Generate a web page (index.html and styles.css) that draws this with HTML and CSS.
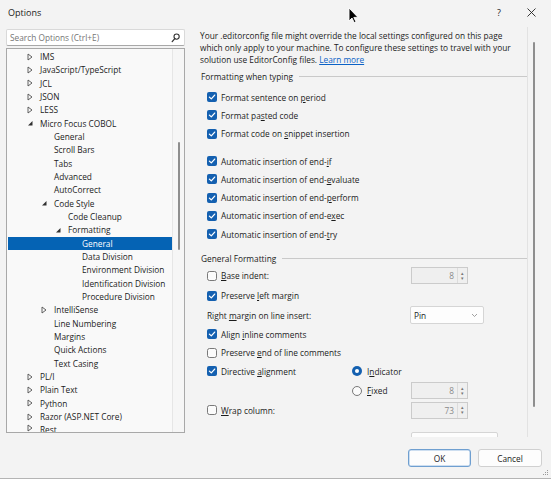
FILE: index.html
```html
<!DOCTYPE html>
<html>
<head>
<meta charset="utf-8">
<link rel="stylesheet" href="styles.css">
</head>
<body>
<svg class="defs" width="0" height="0">
  <defs>
    <symbol id="cb-on" viewBox="0 0 10 10">
      <rect x="0" y="0" width="10" height="10" rx="2" fill="#1460b0"/>
      <path d="M2.4 5.1 L4.3 6.9 L7.7 3.1" fill="none" stroke="#fff" stroke-width="1.3" stroke-linecap="round" stroke-linejoin="round"/>
    </symbol>
    <symbol id="cb-off" viewBox="0 0 10 10">
      <rect x="0.5" y="0.5" width="9" height="9" rx="2" fill="#fbfbfb" stroke="#6a6a6a" stroke-width="0.9"/>
    </symbol>
    <symbol id="rb-on" viewBox="0 0 10 10">
      <circle cx="5" cy="5" r="5" fill="#1460b0"/>
      <circle cx="5" cy="5" r="2" fill="#fff"/>
    </symbol>
    <symbol id="rb-off" viewBox="0 0 10 10">
      <circle cx="5" cy="5" r="4.5" fill="#fbfbfb" stroke="#6a6a6a" stroke-width="0.9"/>
    </symbol>
    <symbol id="tri-r" viewBox="0 0 6 8">
      <path d="M1 1 L5 4 L1 7 Z" fill="none" stroke="#505050" stroke-width="0.9" stroke-linejoin="round"/>
    </symbol>
    <symbol id="tri-d" viewBox="0 0 6 8">
      <path d="M5.5 2 L5.5 6.5 L1 6.5 Z" fill="#303030"/>
    </symbol>
  </defs>
</svg>

<div class="window">
  <div class="titlebar">
    <span class="title">Options</span>
    <span class="tb-spacer"></span>
    <span class="tb-btn help">?</span>
    <span class="tb-btn close"><svg width="9" height="9" viewBox="0 0 9 9"><path d="M0.5 0.5 L8.5 8.5 M8.5 0.5 L0.5 8.5" stroke="#222" stroke-width="0.9"/></svg></span>
  </div>

  <div class="main">
    <div class="left">
      <div class="search">
        <span class="search-ph">Search Options (Ctrl+E)</span>
        <svg class="search-ico" width="9" height="10" viewBox="0 0 9 10"><circle cx="5.6" cy="3.6" r="2.6" fill="none" stroke="#333" stroke-width="1.1"/><path d="M3.8 5.6 L1.2 8.6" stroke="#333" stroke-width="1.3" stroke-linecap="round"/></svg>
      </div>
      <div class="tree">
        <div class="tree-list">
          <div class="node l1"><svg class="arr"><use href="#tri-r"/></svg><span>IMS</span></div>
          <div class="node l1"><svg class="arr"><use href="#tri-r"/></svg><span>JavaScript/TypeScript</span></div>
          <div class="node l1"><svg class="arr"><use href="#tri-r"/></svg><span>JCL</span></div>
          <div class="node l1"><svg class="arr"><use href="#tri-r"/></svg><span>JSON</span></div>
          <div class="node l1"><svg class="arr"><use href="#tri-r"/></svg><span>LESS</span></div>
          <div class="node l1"><svg class="arr"><use href="#tri-d"/></svg><span>Micro Focus COBOL</span></div>
          <div class="node l2"><span class="arr"></span><span>General</span></div>
          <div class="node l2"><span class="arr"></span><span>Scroll Bars</span></div>
          <div class="node l2"><span class="arr"></span><span>Tabs</span></div>
          <div class="node l2"><span class="arr"></span><span>Advanced</span></div>
          <div class="node l2"><span class="arr"></span><span>AutoCorrect</span></div>
          <div class="node l2"><svg class="arr"><use href="#tri-d"/></svg><span>Code Style</span></div>
          <div class="node l3"><span class="arr"></span><span>Code Cleanup</span></div>
          <div class="node l3"><svg class="arr"><use href="#tri-d"/></svg><span>Formatting</span></div>
          <div class="node l4 sel"><span class="arr"></span><span>General</span></div>
          <div class="node l4"><span class="arr"></span><span>Data Division</span></div>
          <div class="node l4"><span class="arr"></span><span>Environment Division</span></div>
          <div class="node l4"><span class="arr"></span><span>Identification Division</span></div>
          <div class="node l4"><span class="arr"></span><span>Procedure Division</span></div>
          <div class="node l2"><svg class="arr"><use href="#tri-r"/></svg><span>IntelliSense</span></div>
          <div class="node l2"><span class="arr"></span><span>Line Numbering</span></div>
          <div class="node l2"><span class="arr"></span><span>Margins</span></div>
          <div class="node l2"><span class="arr"></span><span>Quick Actions</span></div>
          <div class="node l2"><span class="arr"></span><span>Text Casing</span></div>
          <div class="node l1"><svg class="arr"><use href="#tri-r"/></svg><span>PL/I</span></div>
          <div class="node l1"><svg class="arr"><use href="#tri-r"/></svg><span>Plain Text</span></div>
          <div class="node l1"><svg class="arr"><use href="#tri-r"/></svg><span>Python</span></div>
          <div class="node l1"><svg class="arr"><use href="#tri-r"/></svg><span>Razor (ASP.NET Core)</span></div>
          <div class="node l1 last"><svg class="arr"><use href="#tri-r"/></svg><span>Rest</span></div>
        </div>
        <div class="tree-scroll"><div class="tree-thumb"></div></div>
      </div>
    </div>

    <div class="right">
      <div class="content">
        <p class="intro">Your .editorconfig file might override the local settings configured on this page<br>which only apply to your machine. To configure these settings to travel with your<br>solution use EditorConfig files. <a class="link">Learn more</a></p>

        <div class="group-head"><span>Formatting when typing</span></div>
        <div class="cb-group first">
          <div class="cb-row"><svg class="box"><use href="#cb-on"/></svg><span>Format sentence on <u>p</u>eriod</span></div>
          <div class="cb-row"><svg class="box"><use href="#cb-on"/></svg><span>Format pa<u>s</u>ted code</span></div>
          <div class="cb-row"><svg class="box"><use href="#cb-on"/></svg><span>Format code on <u>s</u>nippet insertion</span></div>
        </div>
        <div class="cb-group second">
          <div class="cb-row"><svg class="box"><use href="#cb-on"/></svg><span>Automatic insertion of end-<u>i</u>f</span></div>
          <div class="cb-row"><svg class="box"><use href="#cb-on"/></svg><span>Automatic insertion of end-<u>e</u>valuate</span></div>
          <div class="cb-row"><svg class="box"><use href="#cb-on"/></svg><span>Automatic insertion of end-<u>p</u>erform</span></div>
          <div class="cb-row"><svg class="box"><use href="#cb-on"/></svg><span>Automatic insertion of end-e<u>x</u>ec</span></div>
          <div class="cb-row"><svg class="box"><use href="#cb-on"/></svg><span>Automatic insertion of end-<u>t</u>ry</span></div>
        </div>

        <div class="group-head gf"><span>General Formatting</span></div>
        <div class="gf-grid">
          <div class="cell c1 r1 cb-row"><svg class="box"><use href="#cb-off"/></svg><span><u>B</u>ase indent:</span></div>
          <div class="cell c3 r1"><div class="spin"><span class="val">8</span><span class="spin-btns"><i>▴</i><i>▾</i></span></div></div>

          <div class="cell span r2 cb-row"><svg class="box"><use href="#cb-on"/></svg><span>Preserve <u>l</u>eft margin</span></div>

          <div class="cell c1 r3"><span class="plain-label">Right <u>m</u>argin on line insert:</span></div>
          <div class="cell c3 r3"><div class="combo"><span>Pin</span><svg width="7" height="5" viewBox="0 0 7 5"><path d="M1 1 L3.5 3.5 L6 1" fill="none" stroke="#888" stroke-width="0.8"/></svg></div></div>

          <div class="cell span r4 cb-row"><svg class="box"><use href="#cb-on"/></svg><span>Align <u>i</u>nline comments</span></div>

          <div class="cell span r5 cb-row"><svg class="box"><use href="#cb-off"/></svg><span>Preserve <u>e</u>nd of line comments</span></div>

          <div class="cell c1 r6 cb-row"><svg class="box"><use href="#cb-on"/></svg><span>Directive <u>a</u>lignment</span></div>
          <div class="cell c23 r6 rb-row"><svg class="box"><use href="#rb-on"/></svg><span>I<u>n</u>dicator</span></div>

          <div class="cell c2 r7 rb-row"><svg class="box"><use href="#rb-off"/></svg><span><u>F</u>ixed</span></div>
          <div class="cell c3 r7"><div class="spin"><span class="val">8</span><span class="spin-btns"><i>▴</i><i>▾</i></span></div></div>

          <div class="cell c1 r8 cb-row"><svg class="box"><use href="#cb-off"/></svg><span><u>W</u>rap column:</span></div>
          <div class="cell c3 r8"><div class="spin"><span class="val">73</span><span class="spin-btns"><i>▴</i><i>▾</i></span></div></div>

          <div class="cell c3 r9"><div class="partial"></div></div>
        </div>
      </div>
      <div class="right-scroll"><div class="right-thumb"></div></div>
    </div>
  </div>

  <div class="footer">
    <button class="btn ok">OK</button>
    <button class="btn">Cancel</button>
  </div>

  <svg class="grip" width="6" height="6" viewBox="0 0 6 6"><rect x="4" y="0" width="1" height="1" fill="#999"/><rect x="2" y="2" width="1" height="1" fill="#999"/><rect x="4" y="2" width="1" height="1" fill="#999"/><rect x="0" y="4" width="1" height="1" fill="#999"/><rect x="2" y="4" width="1" height="1" fill="#999"/><rect x="4" y="4" width="1" height="1" fill="#999"/></svg>

  <svg class="cursor" width="11" height="17" viewBox="0 0 11 17"><path d="M1 1 L1 14 L4 11 L6.2 15.6 L8 14.8 L5.8 10.4 L10 10.4 Z" fill="#000" stroke="#fff" stroke-width="0.9" stroke-linejoin="round"/></svg>
</div>
</body>
</html>
```

FILE: styles.css
```css
* { box-sizing: border-box; }
html, body { margin: 0; padding: 0; }
body {
  width: 551px;
  height: 479px;
  overflow: hidden;
  background: #f3f3f3;
  font-family: "Open Sans", "Noto Sans", sans-serif;
  font-size: 8.3px;
  color: #1b1b1b;
}
.defs { position: absolute; width: 0; height: 0; }

.window {
  position: relative;
  width: 551px;
  height: 479px;
  display: flex;
  flex-direction: column;
  border-bottom: 1px solid #b4b4b4;
}

/* title bar */
.titlebar {
  height: 25px;
  display: flex;
  align-items: center;
  flex: none;
}
.title {
  margin-left: 8px;
  font-size: 9px;
  color: #1a1a1a;
}
.tb-spacer { flex: 1; }
.tb-btn {
  width: 20px;
  display: flex;
  justify-content: center;
  font-size: 9px;
  color: #222;
}
.help { margin-right: 12px; }
.close { margin-right: 10px; }

/* main */
.main {
  display: flex;
  height: 412px;
  flex: none;
}
.left {
  width: 179px;
  margin-left: 6px;
  padding-top: 4px;
  display: flex;
  flex-direction: column;
  gap: 2px;
}
.search {
  height: 17px;
  background: #fff;
  border: 1px solid #d9d9d9;
  border-bottom-color: #a8a8a8;
  display: flex;
  align-items: center;
  padding: 0 4px 0 3px;
  border-radius: 2px;
}
.search-ph { flex: 1; color: #767676; }
.search-ico { display: block; }

.tree {
  height: 385px;
  border: 1px solid #a8a8a8;
  background: #f9f9f9;
  display: flex;
  overflow: hidden;
}
.tree-list {
  flex: 1;
  padding-top: 1px;
  overflow: hidden;
}
.node {
  height: 13.33px;
  display: flex;
  align-items: center;
  white-space: nowrap;
  color: #1b1b1b;
}
.node.last { height: 12px; align-items: flex-start; padding-top: 1px; }
.node .arr {
  width: 6px;
  height: 8px;
  flex: none;
  margin-right: 7px;
  display: block;
}
.l1 { padding-left: 20px; }
.l2 { padding-left: 34px; }
.l3 { padding-left: 48px; }
.l4 { padding-left: 62px; }
.node.sel {
  background: #0563b4;
  color: #fff;
  margin-left: 1px;
  padding-left: 61px;
}

.tree-scroll {
  width: 12px;
  flex: none;
  border-left: 1px solid #e6e6e6;
  background: #f6f6f6;
}
.tree-thumb {
  width: 2px;
  height: 108px;
  margin-top: 93px;
  margin-left: 5px;
  background: #8e8e8e;
  border-radius: 1px;
}

/* right panel */
.right {
  margin-left: 8px;
  margin-top: 2px;
  width: 350px;
  height: 410px;
  display: flex;
}
.content {
  flex: 1;
  overflow: hidden;
  padding-left: 7px;
  padding-top: 3px;
  border-right: 1px solid #e2e2e2;
}
.intro {
  margin: 0;
  line-height: 12px;
  white-space: nowrap;
}
.link { color: #0b62c6; text-decoration: underline; }

.group-head {
  display: flex;
  align-items: center;
  height: 12px;
  margin-top: 4px;
  padding-left: 1px;
}
.group-head::after {
  content: "";
  flex: 1;
  height: 1px;
  background: #c9c9c9;
  margin-left: 6px;
}
.group-head.gf { margin-top: 9.5px; }

.cb-group { padding-left: 7px; }
.cb-group.first { margin-top: 6px; }
.cb-group.second { margin-top: 9px; }
.cb-row {
  display: flex;
  align-items: center;
  height: 18.3px;
  white-space: nowrap;
}
.box {
  width: 10px;
  height: 10px;
  flex: none;
  margin-right: 4px;
  display: block;
}
.rb-row {
  display: flex;
  align-items: center;
  white-space: nowrap;
}
.rb-row .box { margin-right: 5px; }

.gf-grid {
  margin-top: 1px;
  display: grid;
  grid-template-columns: 152px 59px 1fr;
  grid-template-rows: 20px 20px 19px 18.5px 18.5px 19px 19.5px 19.5px 20px;
}
.cell { display: flex; align-items: center; }
.gf-grid .cb-row { height: auto; padding-left: 7px; }
.plain-label { display: block; margin-left: 7px; white-space: nowrap; }
.c1 { grid-column: 1; }
.c2 { grid-column: 2; }
.c3 { grid-column: 3; }
.c23 { grid-column: 2 / 4; }
.span { grid-column: 1 / 4; }
.r1 { grid-row: 1; } .r2 { grid-row: 2; } .r3 { grid-row: 3; }
.r4 { grid-row: 4; } .r5 { grid-row: 5; } .r6 { grid-row: 6; }
.r7 { grid-row: 7; } .r8 { grid-row: 8; } .r9 { grid-row: 9; align-items: flex-start; }

.spin {
  width: 57px;
  height: 17px;
  border: 1px solid #cbcbcb;
  background: #efefef;
  display: flex;
  align-items: center;
  color: #8a8a8a;
}
.spin .val { flex: 1; text-align: right; padding-right: 3px; }
.spin-btns {
  width: 9px;
  height: 100%;
  border-left: 1px solid #dcdcdc;
  display: flex;
  flex-direction: column;
  justify-content: center;
  align-items: center;
  margin-right: 1px;
}
.spin-btns i {
  font-style: normal;
  font-size: 5px;
  line-height: 5px;
  color: #777;
}
.combo {
  width: 74px;
  height: 18px;
  margin-left: -1px;
  background: #fdfdfd;
  border: 1px solid #d5d5d5;
  border-radius: 2px;
  display: flex;
  align-items: center;
  justify-content: space-between;
  padding: 0 5px 0 3px;
}
.partial {
  width: 87px;
  height: 20px;
  margin-top: 12px;
  background: #fdfdfd;
  border: 1px solid #d5d5d5;
  border-radius: 2px;
}

.right-scroll {
  width: 15px;
  flex: none;
  height: 410px;
}
.right-thumb {
  width: 2px;
  height: 365px;
  margin-top: 15px;
  margin-left: 5px;
  background: #8e8e8e;
  border-radius: 1px;
}

/* footer */
.footer {
  flex: 1;
  display: flex;
  justify-content: flex-end;
  align-items: flex-start;
  gap: 7px;
  padding-top: 12px;
  padding-right: 9px;
}
.btn {
  height: 18px;
  border: 1px solid #d0d0d0;
  background: #fdfdfd;
  border-radius: 3px;
  font-family: inherit;
  font-size: 8.3px;
  color: #1b1b1b;
  padding: 0;
}
.btn.ok { width: 63px; border-color: #6f9fd0; box-shadow: inset 0 0 0 0.5px #9dc0e4; }
.btn:not(.ok) { width: 64px; }

.grip { position: absolute; right: 2px; bottom: 2px; }
.cursor { position: absolute; left: 348px; top: 7px; }
```
